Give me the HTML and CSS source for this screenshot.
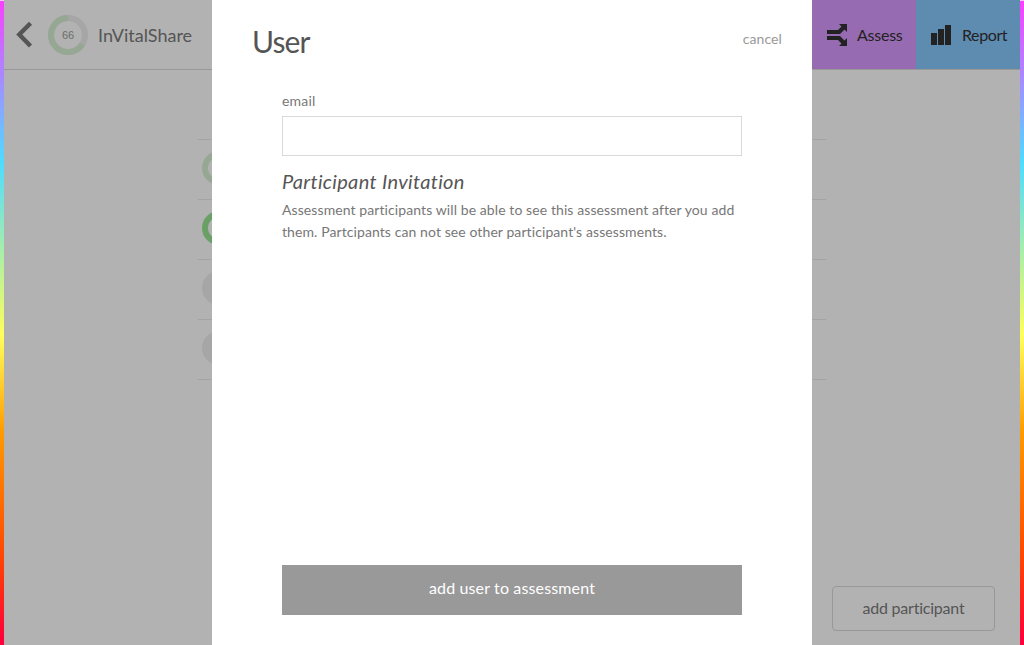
FILE: index.html
```html
<!DOCTYPE html>
<html lang="en">
<head>
<meta charset="utf-8">
<title>InVitalShare</title>
<link rel="stylesheet" href="styles.css">
</head>
<body>
<div class="frame">
  <div class="rainbow"></div>
  <div class="app">
    <header class="header">
      <svg class="back" width="17" height="27" viewBox="0 0 17 27"><path d="M14.500 2.300 L3.300 13.500 L14.500 25" fill="none" stroke="#555" stroke-width="4.400"/></svg>
      <div class="score">
        <svg width="40" height="40" viewBox="0 0 40 40"><circle cx="20" cy="20" r="17" fill="none" stroke="#a6a6a6" stroke-width="6"/><circle cx="20" cy="20" r="17" fill="none" stroke="#96a893" stroke-width="6" pathLength="100" stroke-dasharray="66 34" transform="rotate(32.400 20 20)"/></svg>
        <span class="score-value">66</span>
      </div>
      <h1 class="title">InVitalShare</h1>
      <nav class="tabs">
        <a class="tab assess">
          <svg width="22" height="24" viewBox="0 0 22 24"><path d="M1 7H12L15.500 3.500L13 1H21V9L18.500 6.500L14 11H1ZM1 13H14L18.500 17.500L21 15V23H13L15.500 20.500L12 17H1Z" fill="#222"/></svg>
          <span class="tab-label">Assess</span>
        </a>
        <a class="tab report">
          <svg width="20" height="20" viewBox="0 0 20 20"><path d="M0 8H6V20H0ZM7 4H13V20H7ZM14 0H20V20H14Z" fill="#222"/></svg>
          <span class="tab-label">Report</span>
        </a>
      </nav>
    </header>
    <main class="content">
      <ul class="participants">
        <li class="row"><i class="ring pale"></i></li>
        <li class="row"><i class="ring green"></i></li>
        <li class="row"><i class="ring empty"></i></li>
        <li class="row"><i class="ring empty"></i></li>
      </ul>
      <button class="add-participant">add participant</button>
    </main>
  </div>
  <div class="rainbow"></div>
</div>
<section class="modal">
  <div class="modal-head">
    <h2 class="modal-title">User</h2>
    <a class="cancel">cancel</a>
  </div>
  <form class="form">
    <label class="label" for="email">email</label>
    <input class="input" id="email" type="text">
    <h3 class="subtitle">Participant Invitation</h3>
    <p class="note"><span class="line">Assessment participants will be able to see this assessment after you add</span> <span class="line">them. Partcipants can not see other participant's assessments.</span></p>
    <button class="submit" type="button">add user to assessment</button>
  </form>
</section>
</body>
</html>
```
FILE: styles.css
```css
* { box-sizing: border-box; }
body { margin: 0; height: 645px; overflow: hidden; font-family: Lato, "Open Sans", sans-serif; font-variant-ligatures: none; color: #555; position: relative; }
h1, h2, h3, p, ul { margin: 0; padding: 0; font-weight: 400; }
button { font-family: inherit; font-variant-ligatures: none; padding: 0; }
.frame { display: flex; height: 645px; }
.rainbow { width: 4px; border-top: 1px solid #f5c8f5; background: linear-gradient(#f940ff 0%, #4ddcff 25%, #ffff5a 52%, #ff9a00 67%, #ff4800 86%, #ff0038 99%); }
.app { flex: 1; display: flex; flex-direction: column; background: #b2b2b2; }
.header { display: flex; align-items: center; height: 70px; border-bottom: 1px solid #989898; padding-left: 12px; }
.back { flex: none; }
.score { display: grid; place-items: center; width: 40px; height: 40px; margin-left: 15px; margin-top: 1px; }
.score > * { grid-area: 1 / 1; }
.score-value { font: 11px "Liberation Sans", Arial, sans-serif; color: #6c6c6c; }
.title { margin-left: 10px; font-size: 18px; line-height: 24px; }
.tabs { display: flex; margin-left: auto; height: 69px; }
.tab { display: flex; align-items: center; font-size: 16px; color: #222; padding-top: 1px; }
.assess { width: 104px; background: #976bb1; padding-left: 14px; gap: 9px; letter-spacing: -0.25px; }
.report { width: 104px; background: #5e8bb0; padding-left: 15px; gap: 11px; letter-spacing: -0.4px; }
.tab-label { padding-bottom: 1px; }
.content { flex: 1; display: flex; flex-direction: column; padding: 69px 25px 14px 194px; }
.participants { list-style: none; width: 628px; border-top: 1px solid #a3a3a3; }
.row { display: flex; align-items: center; height: 60px; border-bottom: 1px solid #a3a3a3; padding: 0 0 3px 4px; }
.ring { width: 34px; height: 34px; border-radius: 50%; }
.pale { border: 6px solid #96a893; }
.green { border: 6px solid #6aa065; }
.empty { background: #a6a6a6; }
.add-participant { margin: auto 0 0 auto; width: 163px; height: 45px; border: 1px solid #989898; border-radius: 4px; background: none; font-size: 16px; letter-spacing: -0.22px; color: #555; padding-bottom: 2px; }
.modal { position: absolute; left: 212px; top: 0; width: 600px; height: 645px; background: #fff; padding: 23px 30px 30px 40px; display: flex; flex-direction: column; }
.modal-head { display: flex; justify-content: space-between; height: 68px; }
.modal-title { font-size: 30px; line-height: 36px; letter-spacing: -0.9px; }
.cancel { font-size: 14px; line-height: 20px; letter-spacing: 0.1px; color: #999; padding-top: 6px; }
.form { flex: 1; display: flex; flex-direction: column; width: 460px; margin-left: 30px; }
.label { font-size: 14px; line-height: 20px; height: 25px; letter-spacing: 0.2px; color: #777; }
.input { width: 460px; height: 40px; border: 1px solid #d9d9d9; border-radius: 0; background: #fff; padding: 0 10px; }
.subtitle { font-size: 20px; font-style: italic; line-height: 24px; letter-spacing: 0.33px; margin-top: 13px; }
.note { font-size: 14px; line-height: 22px; color: #777; margin-top: 6px; }
.line { display: block; white-space: nowrap; letter-spacing: 0.09px; }
.submit { margin-top: auto; height: 50px; border: 0; background: #999; color: #fff; font-size: 16px; letter-spacing: 0.14px; padding-bottom: 5px; }
```
